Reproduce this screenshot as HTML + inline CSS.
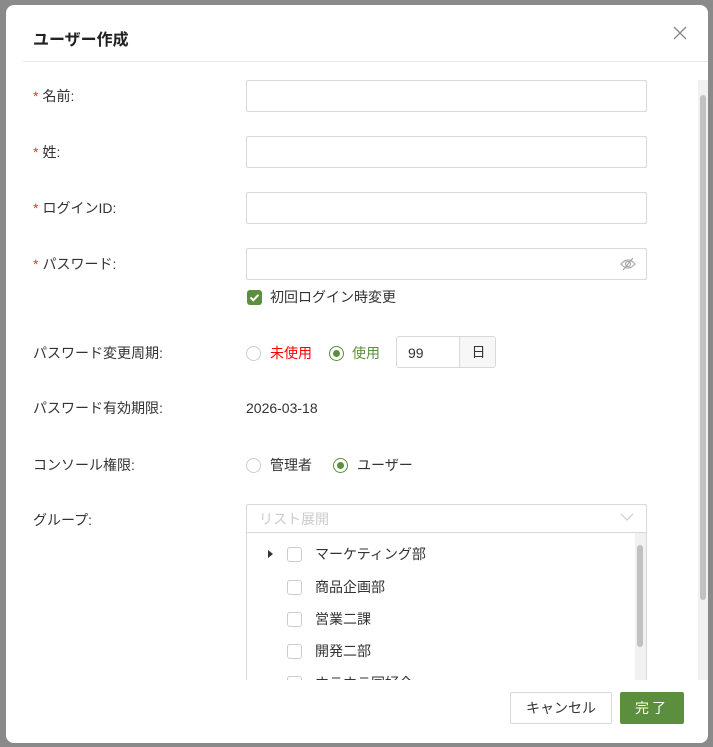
<!DOCTYPE html>
<html><head><meta charset="utf-8"><style>
*{box-sizing:border-box;margin:0;padding:0}
body{width:713px;height:747px;background:#8a8a8a;font-family:"Liberation Sans","Noto Sans CJK JP",sans-serif;font-size:14px;color:#333;position:relative;overflow:hidden}
.modal{position:absolute;left:6px;top:5px;width:702px;height:738px;background:#fff;border-radius:8px;overflow:hidden}
.a{position:absolute}
.title{left:27px;top:21px;font-size:16px;font-weight:bold;color:#222}
.hr{left:17px;top:56px;right:0;height:1px;background:#e8e8e8}
.lbl{left:27px;font-size:14px;color:#333;line-height:20px}
.lbl b{color:#e33;font-weight:normal;margin-right:4px}
.inp{left:240px;width:401px;height:32px;border:1px solid #d9d9d9;border-radius:2px}
.rad{width:15px;height:15px;border:1px solid #ccc;border-radius:50%}
.rad.on{border-color:#5b8f3d}
.rad.on:after{content:"";position:absolute;left:3px;top:3px;width:7px;height:7px;border-radius:50%;background:#5b8f3d}
.cb{width:15px;height:15px;border:1px solid #ccc;border-radius:3px}
.t{line-height:20px}
</style></head><body>
<div class="modal">
<div class="a title">ユーザー作成</div>
<svg class="a" style="left:667px;top:21px" width="14" height="14"><path d="M1 1L13 13M13 1L1 13" stroke="#888" stroke-width="1.3"/></svg>
<div class="a hr"></div>
<div class="a lbl" style="top:81px"><b>*</b>名前:</div>
<div class="a inp" style="top:75px"></div>
<div class="a lbl" style="top:137px"><b>*</b>姓:</div>
<div class="a inp" style="top:131px"></div>
<div class="a lbl" style="top:193px"><b>*</b>ログインID:</div>
<div class="a inp" style="top:187px"></div>
<div class="a lbl" style="top:249px"><b>*</b>パスワード:</div>
<div class="a inp" style="top:243px"></div>
<svg class="a" style="left:614px;top:252px" width="16" height="14"><path d="M1 7Q8 -1 15 7Q8 15 1 7Z" fill="none" stroke="#aaa" stroke-width="1.2"/><circle cx="8" cy="7" r="2.5" fill="none" stroke="#aaa" stroke-width="1.2"/><path d="M3 13L13 1" stroke="#aaa" stroke-width="1.2"/></svg>
<div class="a" style="left:241px;top:285px;width:15px;height:15px;background:#5b8f3d;border-radius:3px"><svg width="15" height="15"><path d="M3.5 7.5L6.3 10.2L11.5 4.8" fill="none" stroke="#fff" stroke-width="2"/></svg></div>
<div class="a t" style="left:264px;top:282px">初回ログイン時変更</div>
<div class="a lbl" style="top:338px">パスワード変更周期:</div>
<div class="a rad" style="left:240px;top:341px"></div>
<div class="a t" style="left:264px;top:338px;color:#f00">未使用</div>
<div class="a rad on" style="left:323px;top:341px"></div>
<div class="a t" style="left:346px;top:338px;color:#5b8f3d">使用</div>
<div class="a" style="left:390px;top:331px;width:100px;height:32px;border:1px solid #d9d9d9;border-radius:3px;overflow:hidden"><div class="a t" style="left:11px;top:6px">99</div><div class="a" style="left:62px;top:0;width:38px;height:30px;background:#f7f7f7;border-left:1px solid #d9d9d9;text-align:center;line-height:30px">日</div></div>
<div class="a lbl" style="top:393px">パスワード有効期限:</div>
<div class="a t" style="left:240px;top:393px">2026-03-18</div>
<div class="a lbl" style="top:450px">コンソール権限:</div>
<div class="a rad" style="left:240px;top:453px"></div>
<div class="a t" style="left:264px;top:450px">管理者</div>
<div class="a rad on" style="left:327px;top:453px"></div>
<div class="a t" style="left:351px;top:450px">ユーザー</div>
<div class="a lbl" style="top:505px">グループ:</div>
<div class="a" style="left:240px;top:499px;width:401px;height:200px;border:1px solid #d9d9d9;border-radius:2px"></div>
<div class="a" style="left:240px;top:527px;width:401px;height:1px;background:#d9d9d9"></div>
<div class="a t" style="left:253px;top:504px;color:#ccc">リスト展開</div>
<svg class="a" style="left:614px;top:508px" width="14" height="9"><path d="M1 1L7 7L13 1" fill="none" stroke="#ccc" stroke-width="1.2"/></svg>
<div class="a" style="left:629px;top:528px;width:11px;height:150px;background:#f1f1f1"></div>
<div class="a" style="left:631px;top:540px;width:6px;height:102px;background:#c1c1c1;border-radius:3px"></div>
<svg class="a" style="left:262px;top:545px" width="5" height="8"><path d="M0 0L5 4L0 8Z" fill="#333"/></svg>
<div class="a cb" style="left:281px;top:542px"></div><div class="a t" style="left:309px;top:539px">マーケティング部</div>
<div class="a cb" style="left:281px;top:575px"></div><div class="a t" style="left:309px;top:572px">商品企画部</div>
<div class="a cb" style="left:281px;top:607px"></div><div class="a t" style="left:309px;top:604px">営業二課</div>
<div class="a cb" style="left:281px;top:639px"></div><div class="a t" style="left:309px;top:636px">開発二部</div>
<div class="a cb" style="left:281px;top:671px"></div><div class="a t" style="left:309px;top:668px">ホテホテ同好会</div>
<div class="a" style="left:0;top:675px;width:702px;height:63px;background:#fff"></div>
<div class="a" style="left:692px;top:75px;width:10px;height:600px;background:#f1f1f1"></div>
<div class="a" style="left:694px;top:90px;width:6px;height:505px;background:#c1c1c1;border-radius:3px"></div>
<div class="a" style="left:504px;top:687px;width:102px;height:32px;border:1px solid #d9d9d9;border-radius:2px;text-align:center;line-height:30px">キャンセル</div>
<div class="a" style="left:614px;top:687px;width:64px;height:32px;background:#5b8f3d;border-radius:2px;text-align:center;line-height:32px;color:#fff;letter-spacing:3px">完了</div>
</div>
</body></html>
